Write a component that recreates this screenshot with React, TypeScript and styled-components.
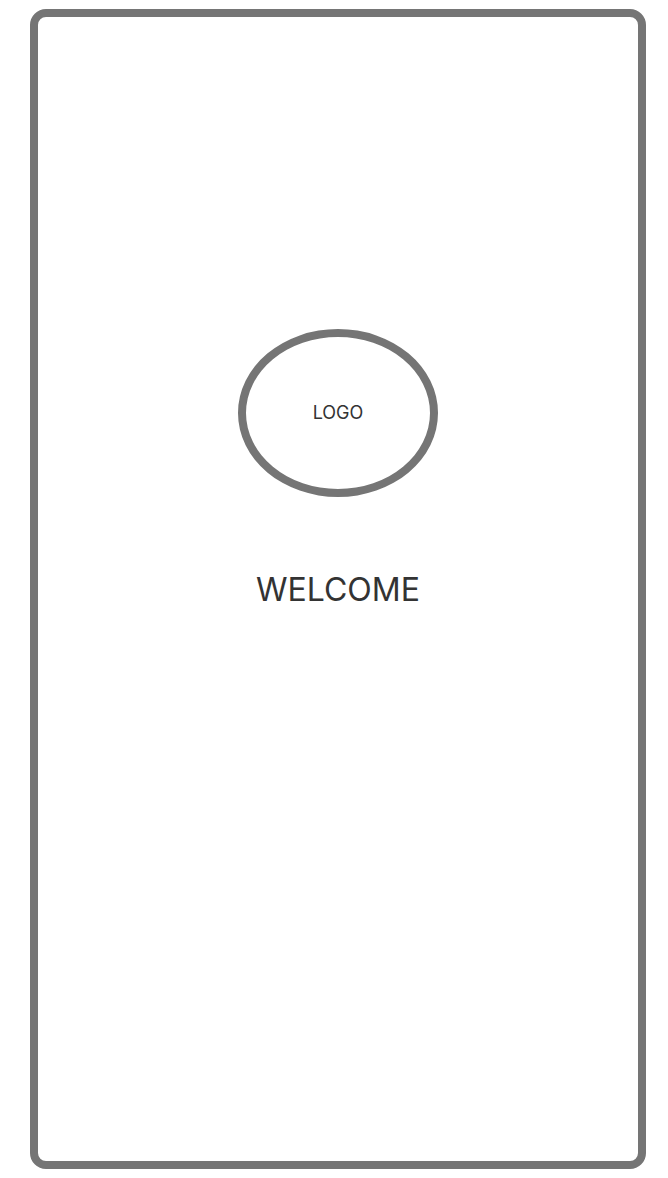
import React from "react";
import styled, { createGlobalStyle } from "styled-components";

const GlobalStyle = createGlobalStyle`
  *, *::before, *::after {
    box-sizing: border-box;
  }

  body {
    margin: 0;
    background: #ffffff;
    color: #333333;
    font-family: Inter, "Liberation Sans", sans-serif;
  }
`;

const Page = styled.div`
  display: flex;
  min-height: 100vh;
  padding: 9px 22px 9px 30px;
`;

const Screen = styled.main`
  display: flex;
  flex: 1;
  flex-direction: column;
  align-items: center;
  padding: 312px 16px 48px;
  border: 8px solid #757575;
  border-radius: 16px;
  background: #ffffff;
`;

const Logo = styled.div`
  display: flex;
  align-items: center;
  justify-content: center;
  width: 200px;
  height: 168px;
  border: 8px solid #757575;
  border-radius: 50%;
  font-size: 18px;
  line-height: 24px;
`;

const Title = styled.h1`
  margin: 72px 0 0;
  font-size: 32px;
  font-weight: 400;
  line-height: 42px;
`;

export default function App() {
  return (
    <>
      <GlobalStyle />
      <Page>
        <Screen>
          <Logo>LOGO</Logo>
          <Title>WELCOME</Title>
        </Screen>
      </Page>
    </>
  );
}
